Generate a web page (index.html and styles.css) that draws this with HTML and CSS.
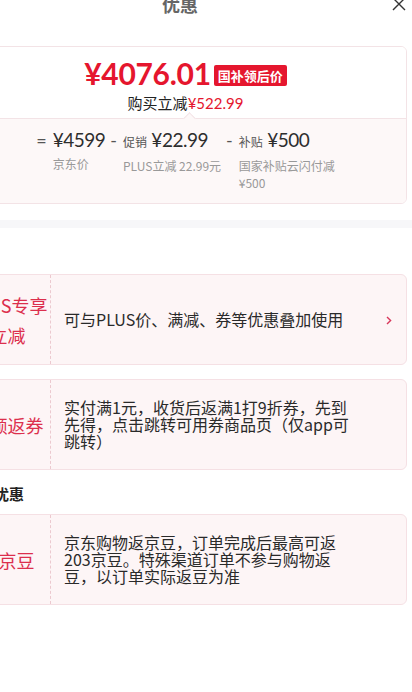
FILE: index.html
```html
<!DOCTYPE html>
<html lang="zh-CN">
<head>
<meta charset="utf-8">
<title>优惠</title>
<link rel="stylesheet" href="styles.css">
</head>
<body>
<div class="sheet">
  <header class="head">
    <span class="head-side"></span>
    <h1 class="head-title">优惠</h1>
    <span class="head-side head-right">
      <svg class="close" width="14" height="14" viewBox="0 0 14 14"><path d="M1 1L13 13M13 1L1 13" stroke="#333" stroke-width="1.4" fill="none"/></svg>
    </span>
  </header>

  <div class="pad">
    <section class="summary">
      <div class="sum-top">
        <div class="price-line">
          <span class="price">¥4076.01</span>
          <span class="tag">国补领后价</span>
        </div>
        <div class="save">购买立减<span class="red">¥522.99</span></div>
      </div>
      <div class="sum-bottom">
        <span class="notch"></span>
        <div class="calc">
          <div class="term">
            <span class="op">=</span>
            <div class="term-body">
              <div class="val">¥4599</div>
              <div class="cap">京东价</div>
            </div>
          </div>
          <div class="term">
            <span class="op">-</span>
            <div class="term-body">
              <div class="val"><span class="kind">促销</span> ¥22.99</div>
              <div class="cap">PLUS立减 22.99元</div>
            </div>
          </div>
          <div class="term">
            <span class="op">-</span>
            <div class="term-body narrow">
              <div class="val"><span class="kind">补贴</span> ¥500</div>
              <div class="cap">国家补贴云闪付减¥500</div>
            </div>
          </div>
        </div>
      </div>
    </section>
  </div>

  <div class="band"></div>

  <div class="pad">
    <h2 class="sec-title">促销</h2>
    <div class="list">
      <div class="card">
        <div class="label">PLUS专享<br>立减</div>
        <div class="desc with-chev">可与PLUS价、满减、券等优惠叠加使用</div>
        <svg class="chev" width="6" height="9" viewBox="0 0 6 9"><path d="M1 1L4.6 4.5L1 8" stroke="#d8375a" stroke-width="1.4" fill="none"/></svg>
      </div>
      <div class="card">
        <div class="label">满额返券</div>
        <div class="desc">实付满1元，收货后返满1打9折券，先到先得，点击跳转可用券商品页（仅app可跳转）</div>
      </div>
    </div>

    <h2 class="sec-title">其他优惠</h2>
    <div class="list">
      <div class="card">
        <div class="label">返京豆</div>
        <div class="desc">京东购物返京豆，订单完成后最高可返203京豆。特殊渠道订单不参与购物返豆，以订单实际返豆为准</div>
      </div>
    </div>
  </div>
</div>
</body>
</html>
```

FILE: styles.css
```css
html, body {
  margin: 0;
  padding: 0;
  background: #ffffff;
  overflow: hidden;
}

body {
  font-family: "Noto Sans CJK SC", "Noto Sans", sans-serif;
  color: #333333;
}

.sheet {
  width: 458px;
  margin-left: -46px;
}

.head {
  display: grid;
  grid-template-columns: 1fr auto 1fr;
  align-items: center;
  height: 44px;
  margin-top: -18px;
  padding-right: 6px;
}

.head-title {
  margin: 0;
  font-size: 18px;
  line-height: 24px;
  font-weight: bold;
  color: #666666;
}

.head-right {
  display: flex;
  justify-content: flex-end;
}

.close {
  display: block;
}

.pad {
  padding: 0 5px 0 10px;
}

.summary {
  margin-top: 20px;
  border: 1px solid #f3e3e6;
  border-radius: 6px;
  overflow: hidden;
}

.sum-top {
  padding: 8px 0 5px;
  background: #ffffff;
  display: flex;
  flex-direction: column;
  align-items: center;
}

.price-line {
  display: flex;
  align-items: center;
  gap: 3px;
}

.price {
  font-family: Lato, "Noto Sans", sans-serif;
  font-weight: bold;
  font-size: 30px;
  line-height: 36px;
  color: #e5162e;
  letter-spacing: -0.3px;
}

.tag {
  margin-top: 5px;
  background: #e5162e;
  color: #ffffff;
  font-size: 13px;
  font-weight: bold;
  line-height: 21px;
  padding: 0 4px;
  border-radius: 2px;
}

.save {
  margin-top: 2px;
  font-size: 15px;
  line-height: 20px;
  color: #222222;
}

.red {
  color: #e5162e;
  font-family: Lato, "Noto Sans CJK SC", sans-serif;
}

.sum-bottom {
  position: relative;
  border-top: 1px solid #f3e3e6;
  background: #fdf8f8;
  padding: 9px 0 12px;
}

.notch {
  position: absolute;
  left: 220px;
  top: -5px;
  width: 8px;
  height: 8px;
  background: #fdf8f8;
  border-top: 1px solid #f3e3e6;
  border-left: 1px solid #f3e3e6;
  transform: rotate(45deg);
}

.calc {
  display: flex;
  justify-content: center;
  gap: 5px;
  padding-left: 4px;
}

.term {
  display: flex;
  align-items: flex-start;
  gap: 6px;
}

.op {
  font-family: Lato, "Noto Sans", sans-serif;
  font-size: 18px;
  line-height: 24px;
  color: #555555;
}

.val {
  font-family: Lato, "Noto Sans CJK SC", sans-serif;
  font-size: 19px;
  line-height: 24px;
  color: #2e2e2e;
  letter-spacing: -0.5px;
  white-space: nowrap;
}

.kind {
  font-family: "Noto Sans CJK SC", sans-serif;
  font-size: 12px;
  color: #555555;
  letter-spacing: 0;
}

.cap {
  margin-top: 3px;
  font-size: 12px;
  line-height: 17px;
  color: #999999;
}

.narrow {
  max-width: 100px;
}

.band {
  margin-top: 16px;
  height: 8px;
  background: #f7f7f9;
}

.sec-title {
  margin: 16px 0 10px;
  font-size: 15px;
  line-height: 20px;
  font-weight: bold;
  color: #222222;
}

.list {
  display: flex;
  flex-direction: column;
  gap: 14px;
}

.list + .sec-title {
  margin-top: 14px;
}

.card {
  display: flex;
  align-items: stretch;
  min-height: 91px;
  box-sizing: border-box;
  background: #fdf5f6;
  border: 1px solid #f5e0e4;
  border-radius: 6px;
}

.label {
  flex: 0 0 85px;
  display: flex;
  align-items: center;
  justify-content: center;
  text-align: center;
  border-right: 1px dashed #ecc9cf;
  font-size: 18px;
  line-height: 30px;
  color: #dc2f4d;
}

.desc {
  flex: 1;
  align-self: center;
  padding: 0 56px 0 13px;
  font-size: 16px;
  line-height: 17px;
  color: #2a2a2a;
}

.desc.with-chev {
  padding-right: 10px;
}

.chev {
  align-self: center;
  flex: 0 0 6px;
  margin: 2px 14px 0 0;
}
```
